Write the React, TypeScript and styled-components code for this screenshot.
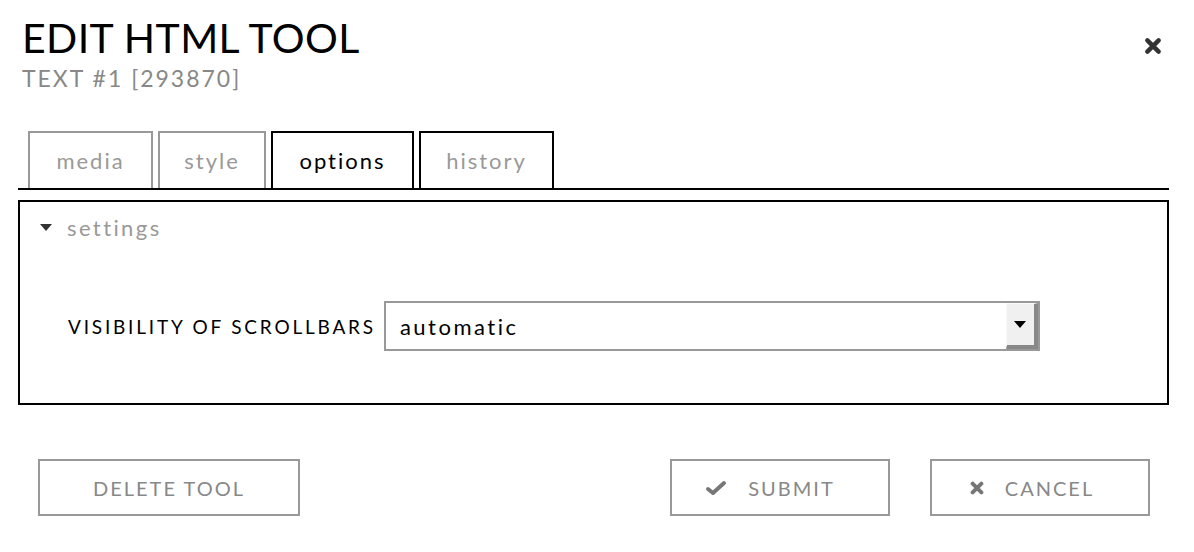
import React, { useState } from "react";
import styled, { createGlobalStyle } from "styled-components";

const Global = createGlobalStyle`
  html, body {
    margin: 0;
    padding: 0;
    background: #fff;
  }
  body {
    font-family: "Lato", "Open Sans", sans-serif;
    color: #000;
  }
  * {
    box-sizing: border-box;
  }
`;

const S = {
  Dialog: styled.div`
    width: 1194px;
    padding: 14px 25px 0 18px;
  `,
  Header: styled.header`
    display: flex;
    justify-content: space-between;
    align-items: flex-start;
    padding-left: 4px;
  `,
  Titles: styled.div`
    display: flex;
    flex-direction: column;
  `,
  Title: styled.h1`
    margin: 0;
    font-size: 41px;
    font-weight: 400;
    letter-spacing: 0.4px;
    line-height: 48px;
  `,
  Subtitle: styled.div`
    margin-top: 2px;
    font-size: 23px;
    color: #888;
    letter-spacing: 2px;
    line-height: 28px;
  `,
  Close: styled.button`
    margin-top: 23px;
    margin-right: 7px;
    padding: 0;
    border: none;
    background: none;
    cursor: pointer;
    display: flex;
  `,
  Tabs: styled.nav`
    display: flex;
    gap: 5px;
    margin-top: 39px;
    padding-left: 10px;
    border-bottom: 2px solid #000;
  `,
  Tab: styled.button<{ $active?: boolean; $dark?: boolean; $width: number }>`
    width: ${(p) => p.$width}px;
    height: 57px;
    padding: 0;
    border: 2px solid ${(p) => (p.$dark ? "#000" : "#999")};
    border-bottom: none;
    background: #fff;
    font-family: inherit;
    font-size: 22px;
    letter-spacing: 2px;
    color: ${(p) => (p.$active ? "#000" : "#999")};
    cursor: pointer;
  `,
  Panel: styled.section`
    margin-top: 10px;
    height: 205px;
    border: 2px solid #000;
    padding: 12px 0 0 20px;
  `,
  Toggle: styled.div`
    display: flex;
    align-items: center;
    gap: 15px;
    font-size: 22px;
    letter-spacing: 2.4px;
    color: #999;
  `,
  Row: styled.div`
    display: flex;
    align-items: center;
    gap: 8px;
    margin-top: 60px;
    padding-left: 28px;
  `,
  Label: styled.label`
    font-size: 19px;
    letter-spacing: 2.8px;
  `,
  Select: styled.div`
    display: flex;
    width: 656px;
    height: 50px;
    border: 2px solid #999;
  `,
  Value: styled.div`
    flex: 1;
    display: flex;
    align-items: center;
    padding-left: 14px;
    font-size: 22px;
    letter-spacing: 2.5px;
  `,
  Arrow: styled.div`
    width: 32px;
    display: flex;
    align-items: center;
    justify-content: center;
    background: #f0f0f0;
    border-top: 1px solid #fafafa;
    border-left: 1px solid #fafafa;
    border-right: 4px solid #888;
    border-bottom: 4px solid #888;
  `,
  Footer: styled.footer`
    display: flex;
    align-items: center;
    gap: 40px;
    margin-top: 54px;
    padding-left: 20px;
    padding-right: 19px;
  `,
  Spacer: styled.div`
    flex: 1;
  `,
  Button: styled.button<{ $width: number; $shift?: number }>`
    width: ${(p) => p.$width}px;
    height: 57px;
    display: flex;
    align-items: center;
    justify-content: center;
    gap: 21px;
    padding: 0 ${(p) => p.$shift ?? 0}px 0 0;
    border: 2px solid #999;
    background: #fff;
    font-family: inherit;
    font-size: 20px;
    letter-spacing: 2px;
    color: #888;
    cursor: pointer;
  `,
};

const CloseIcon = ({ size, color, weight }: { size: number; color: string; weight: number }) => (
  <svg width={size} height={size} viewBox="0 0 16 16">
    <path d="M3 3 L13 13 M13 3 L3 13" stroke={color} strokeWidth={weight} strokeLinecap="round" />
  </svg>
);

const CheckIcon = () => (
  <svg width="22" height="16" viewBox="0 0 22 16">
    <path d="M3 9 L8 13 L19 3" fill="none" stroke="#777" strokeWidth="4" strokeLinecap="round" strokeLinejoin="round" />
  </svg>
);

const tabs = [
  { id: "media", width: 125 },
  { id: "style", width: 108 },
  { id: "options", width: 143 },
  { id: "history", width: 135 },
];

export default function App() {
  const [tab, setTab] = useState("options");

  return (
    <>
      <Global />
      <S.Dialog>
        <S.Header>
          <S.Titles>
            <S.Title>EDIT HTML TOOL</S.Title>
            <S.Subtitle>TEXT #1 [293870]</S.Subtitle>
          </S.Titles>
          <S.Close aria-label="Close">
            <CloseIcon size={18} color="#333" weight={4} />
          </S.Close>
        </S.Header>

        <S.Tabs>
          {tabs.map((t) => (
            <S.Tab
              key={t.id}
              $width={t.width}
              $active={t.id === tab}
              $dark={t.id === tab || t.id === "history"}
              onClick={() => setTab(t.id)}
            >
              {t.id}
            </S.Tab>
          ))}
        </S.Tabs>

        <S.Panel>
          <S.Toggle>
            <svg width="12" height="8" viewBox="0 0 12 8">
              <path d="M0 0 H12 L6 7 Z" fill="#333" />
            </svg>
            settings
          </S.Toggle>
          <S.Row>
            <S.Label>VISIBILITY OF SCROLLBARS</S.Label>
            <S.Select>
              <S.Value>automatic</S.Value>
              <S.Arrow>
                <svg width="12" height="7" viewBox="0 0 12 7">
                  <path d="M0 0 H12 L6 7 Z" fill="#000" />
                </svg>
              </S.Arrow>
            </S.Select>
          </S.Row>
        </S.Panel>

        <S.Footer>
          <S.Button $width={262}>DELETE TOOL</S.Button>
          <S.Spacer />
          <S.Button $width={220} $shift={20}>
            <CheckIcon />
            SUBMIT
          </S.Button>
          <S.Button $width={220} $shift={16}>
            <CloseIcon size={14} color="#777" weight={4.5} />
            CANCEL
          </S.Button>
        </S.Footer>
      </S.Dialog>
    </>
  );
}
